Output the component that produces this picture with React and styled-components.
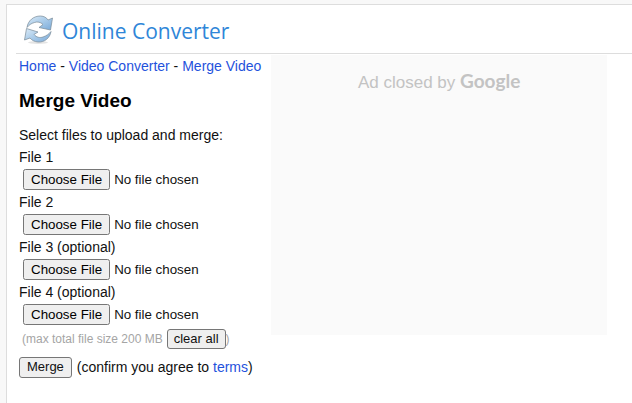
import { useRef } from "react";
import styled, { createGlobalStyle } from "styled-components";

const GlobalStyle = createGlobalStyle`
  body {
    margin: 0;
    background: #f8f8f8;
    color: #111;
    font-family: "Liberation Sans", Arial, sans-serif;
    font-size: 14px;
    line-height: 22px;
  }
`;

const Page = styled.div`
  box-sizing: border-box;
  min-height: 100vh;
  padding: 4px 0 0 6px;
`;

const Panel = styled.div`
  box-sizing: border-box;
  min-height: calc(100vh - 4px);
  border-top: 1px solid #ddd;
  border-left: 1px solid #ddd;
  background: #fff;
`;

const Header = styled.header`
  display: flex;
  align-items: center;
  gap: 8px;
  height: 48px;
  margin-left: 9px;
  padding-left: 6px;
  border-bottom: 1px solid #ddd;
`;

const SiteName = styled.a`
  color: #2f86d8;
  font-family: "Open Sans", sans-serif;
  font-size: 21px;
  line-height: 32px;
  padding-top: 4px;
  text-decoration: none;
`;

const Content = styled.div`
  display: flex;
  align-items: flex-start;
  gap: 10px;
  padding: 1px 25px 0 12px;
`;

const Main = styled.main`
  flex: none;
`;

const Link = styled.a`
  color: #1f52dc;
  text-decoration: none;
`;

const Title = styled.h1`
  margin: 12px 0 11px;
  color: #000;
  font-size: 19px;
  line-height: 24px;
`;

const Intro = styled.p`
  margin: 0;
`;

const Field = styled.div`
  padding-bottom: 1px;
`;

const FieldLabel = styled.label`
  display: block;
`;

const FileInput = styled.input`
  display: block;
  width: 220px;
  margin: 1px 0 0 4px;
  color: #111;
  font-family: inherit;
`;

const Button = styled.button`
  height: ${({ $small }) => ($small ? 20 : 21)}px;
  padding: 0 ${({ $small }) => ($small ? 6 : 7)}px;
  border: 1px solid #767676;
  border-radius: 3px;
  background: #efefef;
  color: #111;
  font-family: inherit;
  font-size: 13px;
  line-height: 16px;
`;

const Hint = styled.div`
  display: flex;
  align-items: center;
  height: 26px;
  padding-left: 3px;
  color: #a5a5a5;
  font-size: 12px;

  button {
    margin-left: 4px;
  }
`;

const Submit = styled.div`
  display: flex;
  align-items: center;
  gap: 5px;
  padding-top: 4px;
`;

const Ad = styled.aside`
  box-sizing: border-box;
  flex: 1;
  min-height: 280px;
  padding-top: 14px;
  background: #fafafa;
  color: #c3c3c3;
  font-size: 17px;
  line-height: 24px;
  text-align: center;
`;

const Google = styled.span`
  font-family: Lato, sans-serif;
  font-size: 19px;
  font-weight: 700;
`;

const files = ["File 1", "File 2", "File 3 (optional)", "File 4 (optional)"];

const Logo = () => (
  <svg width="32" height="32" viewBox="0 0 32 32" aria-hidden="true">
    <defs>
      <linearGradient id="arrow" x1="0" y1="0" x2="1" y2="1">
        <stop offset="0" stopColor="#dcebf7" />
        <stop offset="0.5" stopColor="#a9cbe9" />
        <stop offset="1" stopColor="#79a9d8" />
      </linearGradient>
    </defs>
    <ellipse cx="16" cy="29.500" rx="10" ry="1.500" fill="#e4e4e4" />
    <g
      transform="translate(0.5 1.5)"
      fill="url(#arrow)"
      stroke="#798997"
      strokeWidth="0.7"
      strokeLinejoin="round"
    >
      <path d="M4.500 13C5.500 6 11 1.500 18 1.500C21.500 1.700 24 3 25.500 5.500L30 3.500L28 15.500L16.500 13L20.500 10C18 7.500 15 7 12 8C8.500 9 6.500 10.500 4.500 13Z" />
      <path d="M28.500 17C27.500 23.500 22 28 15.500 27.500C12 27.300 9 25.500 7.500 23.500L2 25.500L4 14L15.500 17.500L11.500 20C14 23 17.500 23.500 20.500 22.500C24 21.300 26.500 19.500 28.500 17Z" />
    </g>
  </svg>
);

const App = () => {
  const form = useRef(null);

  return (
    <Page>
      <GlobalStyle />
      <Panel>
        <Header>
          <Logo />
          <SiteName href="#home">Online Converter</SiteName>
        </Header>
        <Content>
          <Main>
            <nav>
              <Link href="#home">Home</Link> -{" "}
              <Link href="#video">Video Converter</Link> -{" "}
              <Link href="#merge">Merge Video</Link>
            </nav>
            <Title>Merge Video</Title>
            <form ref={form} onSubmit={(e) => e.preventDefault()}>
              <Intro>Select files to upload and merge:</Intro>
              {files.map((label, i) => (
                <Field key={label}>
                  <FieldLabel htmlFor={`file${i + 1}`}>{label}</FieldLabel>
                  <FileInput
                    id={`file${i + 1}`}
                    name={`file${i + 1}`}
                    type="file"
                  />
                </Field>
              ))}
              <Hint>
                (max total file size 200 MB
                <Button
                  type="button"
                  $small
                  onClick={() => form.current.reset()}
                >
                  clear all
                </Button>
                )
              </Hint>
              <Submit>
                <Button type="submit">Merge</Button>
                <span>
                  (confirm you agree to <Link href="#terms">terms</Link>)
                </span>
              </Submit>
            </form>
          </Main>
          <Ad>
            Ad closed by <Google>Google</Google>
          </Ad>
        </Content>
      </Panel>
    </Page>
  );
};

export default App;
